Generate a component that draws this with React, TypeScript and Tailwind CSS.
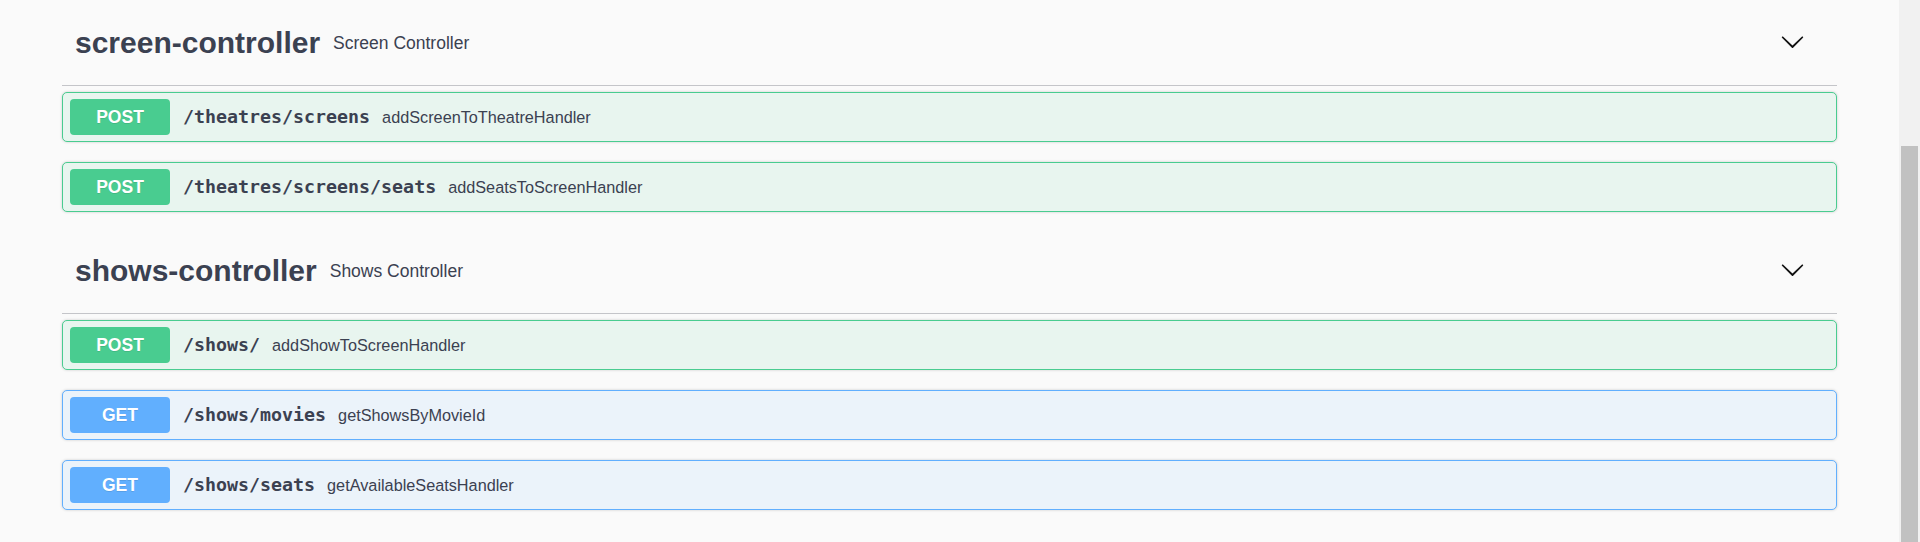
const methodStyles: Record<string, { block: string; badge: string }> = {
    POST: {
        block: "border-[#49cc90] bg-[#e8f5ef]",
        badge: "bg-[#49cc90]",
    },
    GET: {
        block: "border-[#61affe] bg-[#ebf3fa]",
        badge: "bg-[#61affe]",
    },
}

const sections = [
    {
        name: "screen-controller",
        description: "Screen Controller",
        ops: [
            { method: "POST", path: "/theatres/screens", summary: "addScreenToTheatreHandler" },
            { method: "POST", path: "/theatres/screens/seats", summary: "addSeatsToScreenHandler" },
        ],
    },
    {
        name: "shows-controller",
        description: "Shows Controller",
        ops: [
            { method: "POST", path: "/shows/", summary: "addShowToScreenHandler" },
            { method: "GET", path: "/shows/movies", summary: "getShowsByMovieId" },
            { method: "GET", path: "/shows/seats", summary: "getAvailableSeatsHandler" },
        ],
    },
]

function Chevron() {
    return (
        <svg width="25" height="25" viewBox="0 0 20 20" className="mb-[3px] flex-shrink-0">
            <path
                fill="#111"
                d="M17.418 6.109c.272-.268.709-.268.979 0s.271.701 0 .969l-7.908 7.83c-.27.268-.707.268-.979 0l-7.908-7.83c-.27-.268-.27-.701 0-.969.271-.268.709-.268.979 0L10 13.25l7.418-7.141z"
            />
        </svg>
    )
}

function Operation({ method, path, summary }: { method: string; path: string; summary: string }) {
    const s = methodStyles[method]
    return (
        <div className={`flex h-[50px] items-center rounded-[5px] border pl-[7px] shadow-[0_0_3px_rgba(0,0,0,0.19)] ${s.block}`}>
            <div
                className={`flex h-[36px] w-[100px] flex-shrink-0 items-center justify-center rounded-[4px] text-[17.5px] font-bold text-white [text-shadow:0_1px_0_rgba(0,0,0,0.1)] ${s.badge}`}
                style={{ fontFamily: "'Liberation Sans', Arial, sans-serif" }}
            >
                {method}
            </div>
            <span
                className="pl-[13px] pr-[12px] text-[18.3px] font-bold text-[#3b4151]"
                style={{ fontFamily: "'DejaVu Sans Mono', monospace" }}
            >
                {path}
            </span>
            <span
                className="text-[16.25px] text-[#3b4151]"
                style={{ fontFamily: "'Liberation Sans', Arial, sans-serif" }}
            >
                {summary}
            </span>
        </div>
    )
}

export default function App() {
    return (
        <div className="flex h-[542px] w-full overflow-hidden bg-[#fafafa]">
            <div className="flex-1 px-[62px]" style={{ fontFamily: "'Liberation Sans', Arial, sans-serif" }}>
                {sections.map((section, i) => (
                    <div key={section.name} className={i > 0 ? "mt-[16px]" : ""}>
                        {/* Tag header */}
                        <div className="flex h-[86px] items-center border-b border-[#c4c5c9] pl-[13px] pr-[32px]">
                            <h4 className="text-[30px] font-bold text-[#3b4151]">{section.name}</h4>
                            <small className="pl-[13px] pt-[2px] text-[17.5px] text-[#3b4151]">{section.description}</small>
                            <div className="flex-1" />
                            <Chevron />
                        </div>

                        {/* Operations */}
                        <div className="mt-[6px] flex flex-col gap-[20px]">
                            {section.ops.map((op) => (
                                <Operation key={op.path + op.method} {...op} />
                            ))}
                        </div>
                    </div>
                ))}
            </div>

            {/* Scrollbar */}
            <div className="flex w-[21px] flex-shrink-0 flex-col bg-[#f1f1f1] pt-[146px]">
                <div className="mx-[2px] flex-1 bg-[#c1c1c1]" />
            </div>
        </div>
    )
}
